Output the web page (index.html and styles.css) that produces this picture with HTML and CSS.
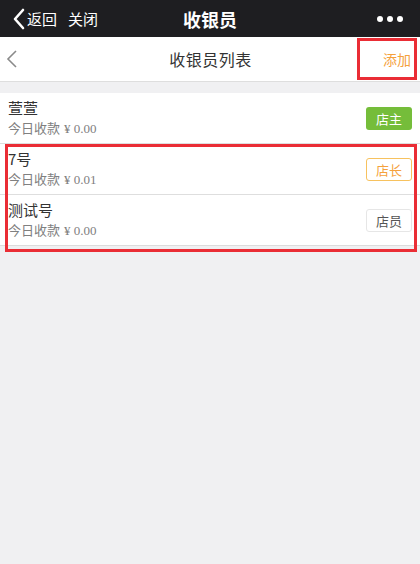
FILE: index.html
```html
<!DOCTYPE html>
<html lang="zh-CN">
<head>
    <meta charset="UTF-8">
    <meta name="viewport" content="width=device-width, initial-scale=1.0">
    <title>收银员</title>
    <link rel="stylesheet" href="styles.css">
</head>
<body>
    <div class="topbar">
        <div class="topbar-left">
            <svg class="back-icon" width="14" height="22" viewBox="0 0 14 22">
                <path d="M11 2 L3 11 L11 20" fill="none" stroke="#fff" stroke-width="2.6" stroke-linecap="round" stroke-linejoin="round"/>
            </svg>
            <span>返回</span>
            <span class="close">关闭</span>
        </div>
        <div class="topbar-title">收银员</div>
        <div class="topbar-more">
            <span class="dot"></span><span class="dot"></span><span class="dot"></span>
        </div>
    </div>

    <div class="header">
        <svg class="header-back" width="12" height="18" viewBox="0 0 12 18">
            <path d="M10 1 L2 9 L10 17" fill="none" stroke="#8a8a8a" stroke-width="1.6"/>
        </svg>
        <div class="header-title">收银员列表</div>
        <div class="header-add">添加</div>
    </div>

    <div class="list">
        <div class="row">
            <div class="info">
                <div class="name">萱萱</div>
                <div class="sub">今日收款 <span class="amount">¥ 0.00</span></div>
            </div>
            <div class="badge badge-owner">店主</div>
        </div>
        <div class="row">
            <div class="info">
                <div class="name">7号</div>
                <div class="sub">今日收款 <span class="amount">¥ 0.01</span></div>
            </div>
            <div class="badge badge-manager">店长</div>
        </div>
        <div class="row">
            <div class="info">
                <div class="name">测试号</div>
                <div class="sub">今日收款 <span class="amount">¥ 0.00</span></div>
            </div>
            <div class="badge badge-staff">店员</div>
        </div>
    </div>

    <!-- annotation boxes -->
    <div class="mark mark-add"></div>
    <div class="mark mark-rows"></div>
</body>
</html>
```

FILE: styles.css
```css
body {
    margin: 0;
    background-color: #f0f0f2;
    font-family: "Noto Sans CJK SC", "Noto Sans", sans-serif;
    position: relative;
    height: 564px;
    overflow: hidden;
}

.topbar {
    height: 37px;
    background-color: #1e1e21;
    color: #fff;
    display: flex;
    align-items: center;
    justify-content: space-between;
    padding: 0 14px 0 12px;
    position: relative;
}

.topbar-left {
    display: flex;
    align-items: center;
    font-size: 15px;
    gap: 1px;
}

.topbar-left .close {
    margin-left: 10px;
}

.topbar-title {
    position: absolute;
    left: 0;
    right: 0;
    text-align: center;
    font-size: 18px;
    font-weight: bold;
    pointer-events: none;
}

.topbar-more {
    display: flex;
    gap: 4px;
    margin-right: 3px;
}

.dot {
    width: 6px;
    height: 6px;
    border-radius: 50%;
    background-color: #fff;
}

.header {
    height: 44px;
    background-color: #fff;
    border-bottom: 1px solid #dedede;
    display: flex;
    align-items: center;
    justify-content: space-between;
    padding: 0 9px 0 6px;
}

.header-title {
    font-size: 16px;
    color: #333;
    margin-left: 20px;
    letter-spacing: 0.5px;
}

.header-add {
    font-size: 14px;
    color: #f5a13c;
}

.list {
    margin-top: 11px;
    background-color: #fff;
    border-bottom: 1px solid #dcdcdc;
}

.row {
    height: 50px;
    display: flex;
    align-items: center;
    justify-content: space-between;
    padding: 0 8px;
    border-bottom: 1px solid #dedede;
}

.row:last-child {
    border-bottom: none;
}

.name {
    font-size: 15px;
    color: #333;
    line-height: 20px;
}

.sub {
    font-size: 13px;
    color: #808080;
    line-height: 20px;
}

.amount {
    font-family: "Liberation Serif", serif;
    font-size: 13px;
    margin-left: 1px;
}

.badge {
    width: 46px;
    height: 23px;
    box-sizing: border-box;
    border-radius: 3px;
    font-size: 13px;
    display: flex;
    align-items: center;
    justify-content: center;
}

.badge-owner {
    background-color: #75bd3a;
    color: #fff;
}

.badge-manager {
    border: 1px solid #f7c25f;
    color: #f5a13c;
}

.badge-staff {
    border: 1px solid #e6e6e6;
    color: #555;
}

.mark {
    position: absolute;
    border: 3px solid #ea2d35;
}

.mark-add {
    left: 357px;
    top: 38px;
    width: 54px;
    height: 36px;
}

.mark-rows {
    left: 5px;
    top: 144px;
    width: 406px;
    height: 102px;
}
```
